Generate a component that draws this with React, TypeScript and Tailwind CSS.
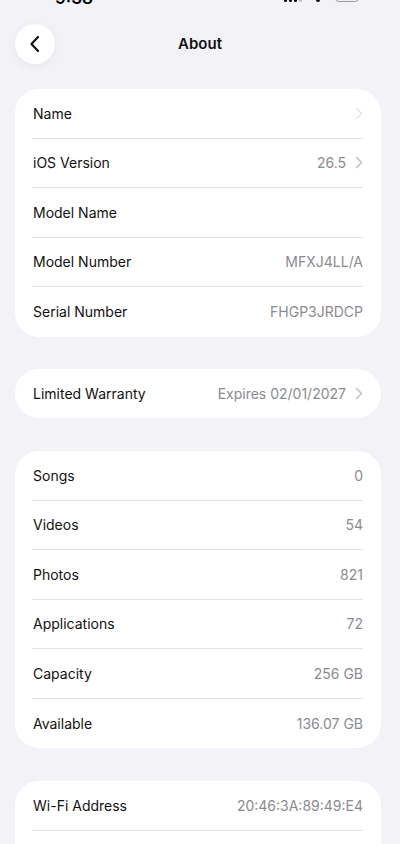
import React from "react";

type Row = { label: string; value?: string; chevron?: boolean; faint?: boolean };

const Chevron = ({ faint }: { faint?: boolean }) => (
  <svg width="8" height="13" viewBox="0 0 8 13" className="ml-[9px]">
    <path
      d="M1.5 1.5 L6.5 6.5 L1.5 11.5"
      fill="none"
      stroke={faint ? "#e6e6e9" : "#c2c2c6"}
      strokeWidth="1.6"
      strokeLinecap="round"
      strokeLinejoin="round"
    />
  </svg>
);

const Card = ({ rows }: { rows: Row[] }) => (
  <div className="ml-[15px] mr-[19px] rounded-[24px] bg-white">
    {rows.map((r, i) => (
      <div key={i} className="pl-[17px] pr-[18px]">
        <div
          className={`flex h-[49.5px] items-center justify-between ${
            i < rows.length - 1 ? "border-b border-[#e3e3e6]" : ""
          }`}
        >
          <span className="pl-[1px] text-[#111111]">{r.label}</span>
          <span className="flex items-center text-[#8b8b8f]">
            {r.value}
            {r.chevron && <Chevron faint={r.faint} />}
          </span>
        </div>
      </div>
    ))}
  </div>
);

export default function App() {
  return (
    <div
      className="min-h-[844px] w-full overflow-hidden bg-[#f2f2f7] text-[14px]"
      style={{ fontFamily: "Inter, 'Liberation Sans', sans-serif" }}
    >
      {/* status bar, mostly off-screen */}
      <div className="relative h-[4px] overflow-hidden">
        <span className="absolute left-[55px] top-[-14px] text-[17px] font-semibold text-black">9:38</span>
        <div className="absolute left-[284px] top-[-8px] flex items-end gap-[2px]">
          <div className="h-[10px] w-[3px] rounded-sm bg-black" />
          <div className="h-[10px] w-[3px] rounded-sm bg-black" />
          <div className="h-[10px] w-[3px] rounded-sm bg-black" />
          <div className="h-[10px] w-[3px] rounded-sm bg-[#bdbdbd]" />
        </div>
        <div className="absolute left-[316px] top-[-4px] h-[6px] w-[4px] rounded-full bg-black" />
        <div className="absolute left-[335px] top-[-10px] h-[12px] w-[24px] rounded-[4px] border border-[#9a9a9a]" />
      </div>

      {/* header */}
      <div className="relative mt-[20px] flex h-[40px] items-center justify-center">
        <button className="absolute left-[15px] top-0 flex h-[40px] w-[40px] items-center justify-center rounded-full bg-white shadow-[0_2px_10px_rgba(0,0,0,0.06)]">
          <svg width="12" height="18" viewBox="0 0 12 18">
            <path
              d="M9 2 L2.5 9 L9 16"
              fill="none"
              stroke="#111"
              strokeWidth="2.2"
              strokeLinecap="round"
              strokeLinejoin="round"
            />
          </svg>
        </button>
        <span className="text-[15px] font-semibold text-[#111]">About</span>
      </div>

      <div className="mt-[25px]">
        <Card
          rows={[
            { label: "Name", chevron: true, faint: true },
            { label: "iOS Version", value: "26.5", chevron: true },
            { label: "Model Name" },
            { label: "Model Number", value: "MFXJ4LL/A" },
            { label: "Serial Number", value: "FHGP3JRDCP" },
          ]}
        />
      </div>

      <div className="mt-[32px]">
        <Card rows={[{ label: "Limited Warranty", value: "Expires 02/01/2027", chevron: true }]} />
      </div>

      <div className="mt-[33px]">
        <Card
          rows={[
            { label: "Songs", value: "0" },
            { label: "Videos", value: "54" },
            { label: "Photos", value: "821" },
            { label: "Applications", value: "72" },
            { label: "Capacity", value: "256 GB" },
            { label: "Available", value: "136.07 GB" },
          ]}
        />
      </div>

      <div className="mt-[33px]">
        <Card rows={[{ label: "Wi-Fi Address", value: "20:46:3A:89:49:E4" }, { label: "" }]} />
      </div>
    </div>
  );
}
